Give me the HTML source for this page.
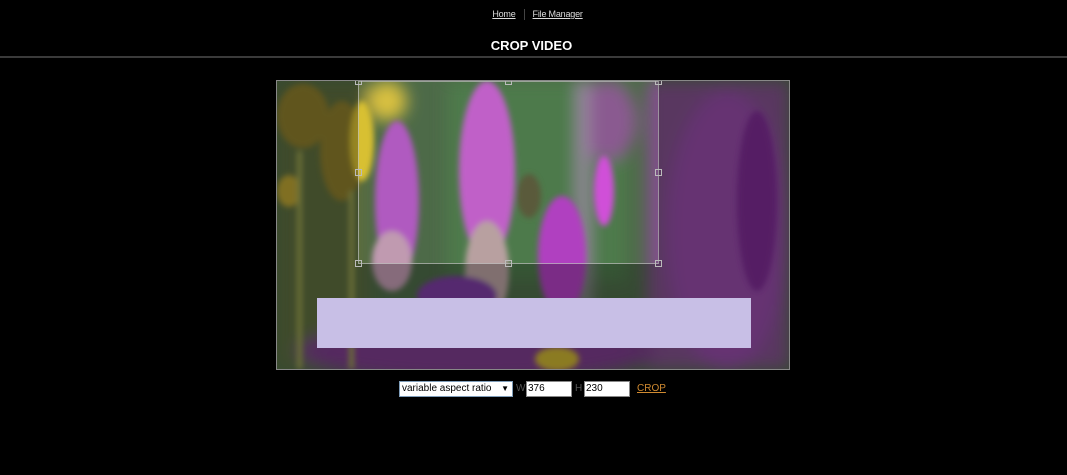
<!DOCTYPE html>
<html><head><style>
body{margin:0;background:#000;width:1067px;height:475px;overflow:hidden;font-family:"Liberation Sans",Arial,sans-serif;position:relative}
.nav{position:absolute;top:9px;left:4px;width:1067px;text-align:center;font-size:9px;color:#ddd;letter-spacing:-0.2px}
.nav a{color:#ddd;text-decoration:underline}
.nav .sep{display:inline-block;width:1px;height:11px;background:#444;vertical-align:middle;margin:0 8px}
h1{position:absolute;top:38px;left:-2px;width:1067px;text-align:center;margin:0;font-size:13px;color:#fff;font-weight:bold}
.bar{position:absolute;top:56px;left:0;width:1067px;height:2px;background:#3a3a3a}
.img{position:absolute;left:276px;top:80px;width:512px;height:288px;border:1px solid #888}
.ctrl{position:absolute;top:381px;left:399px;font-size:10px;color:#555}
.sel{position:absolute;left:0;top:0;width:114px;height:16px;background:#fff;border:1px solid #7f9db9;box-sizing:border-box;color:#000;font-size:10px;line-height:14px;padding-left:2px}
.inp{position:absolute;top:0;height:16px;background:#fff;box-sizing:border-box;border:1px solid #888;color:#000;font-size:10px;line-height:14px;padding-left:1px}
</style></head><body>
<div class="nav"><a>Home</a><span class="sep"></span><a>File Manager</a></div>
<h1>CROP VIDEO</h1>
<div class="bar"></div>
<div class="img">
<svg width="512" height="288" viewBox="0 0 512 288">
<defs>
<filter id="b"><feGaussianBlur stdDeviation="3"/></filter>
<filter id="b2"><feGaussianBlur stdDeviation="8"/></filter>
</defs>
<rect width="512" height="288" fill="#4d6a48"/>
<g filter="url(#b2)">
<rect x="0" y="0" width="90" height="288" fill="#5b6c3c"/>
<rect x="170" y="0" width="180" height="200" fill="#4e7a4c"/>
<rect x="370" y="0" width="142" height="288" fill="#80508a"/>
<ellipse cx="450" cy="150" rx="60" ry="140" fill="#9248a4"/>
<ellipse cx="330" cy="40" rx="30" ry="40" fill="#8a5a90"/>
<ellipse cx="110" cy="20" rx="20" ry="20" fill="#d8c040"/>
<rect x="300" y="0" width="12" height="288" fill="#9a8aa0"/>
<ellipse cx="200" cy="270" rx="180" ry="30" fill="#7a3a8a"/>
</g>
<g filter="url(#b)">
<ellipse cx="26" cy="35" rx="26" ry="32" fill="#8a7a2a"/>
<ellipse cx="65" cy="70" rx="22" ry="50" fill="#8a7a2a"/>
<ellipse cx="85" cy="60" rx="12" ry="40" fill="#d8c030"/>
<ellipse cx="12" cy="110" rx="12" ry="16" fill="#b8a030"/>
<rect x="20" y="70" width="5" height="218" fill="#9aa050"/>
<rect x="72" y="110" width="5" height="178" fill="#9aa050"/>
<ellipse cx="120" cy="120" rx="22" ry="80" fill="#b05ac0"/>
<ellipse cx="115" cy="180" rx="20" ry="30" fill="#c09ab0"/>
<ellipse cx="210" cy="90" rx="28" ry="90" fill="#c060c8"/>
<ellipse cx="210" cy="190" rx="22" ry="50" fill="#b8a0a0"/>
<ellipse cx="252" cy="115" rx="12" ry="22" fill="#5a5a3a"/>
<ellipse cx="285" cy="175" rx="24" ry="60" fill="#b040c0"/>
<ellipse cx="327" cy="110" rx="10" ry="35" fill="#d050d8"/>
<ellipse cx="480" cy="120" rx="20" ry="90" fill="#7a2a90"/>
<ellipse cx="180" cy="215" rx="40" ry="20" fill="#7a3aa0"/>
<ellipse cx="280" cy="278" rx="22" ry="12" fill="#c8b030"/>
</g>
<path d="M0 0H512V288H0Z M81 0V183H381V0Z" fill="rgba(0,0,0,0.3)" fill-rule="evenodd"/>
<rect x="81.5" y="0.5" width="300" height="182" fill="none" stroke="#bbb" stroke-width="1" opacity=".7"/>
<g fill="none" stroke="#bbb">
<rect x="78.5" y="-2.5" width="6" height="6"/><rect x="228.5" y="-2.5" width="6" height="6"/><rect x="378.5" y="-2.5" width="6" height="6"/>
<rect x="78.5" y="88.5" width="6" height="6"/><rect x="378.5" y="88.5" width="6" height="6"/>
<rect x="78.5" y="179.5" width="6" height="6"/><rect x="228.5" y="179.5" width="6" height="6"/><rect x="378.5" y="179.5" width="6" height="6"/>
</g>
<rect x="40" y="217" width="434" height="50" fill="#c8bfe6"/>
</svg>
</div>
<div class="ctrl">
<div class="sel">variable aspect ratio <span style="position:absolute;right:3px;font-size:8px">▼</span></div>
<span style="position:absolute;left:117px;top:2px">W</span>
<div class="inp" style="left:127px;width:46px">376</div>
<span style="position:absolute;left:176px;top:2px">H</span>
<div class="inp" style="left:185px;width:46px">230</div>
<span style="position:absolute;left:238px;top:2px;color:#d08a30;text-decoration:underline">CROP</span>
</div>
</body></html>
